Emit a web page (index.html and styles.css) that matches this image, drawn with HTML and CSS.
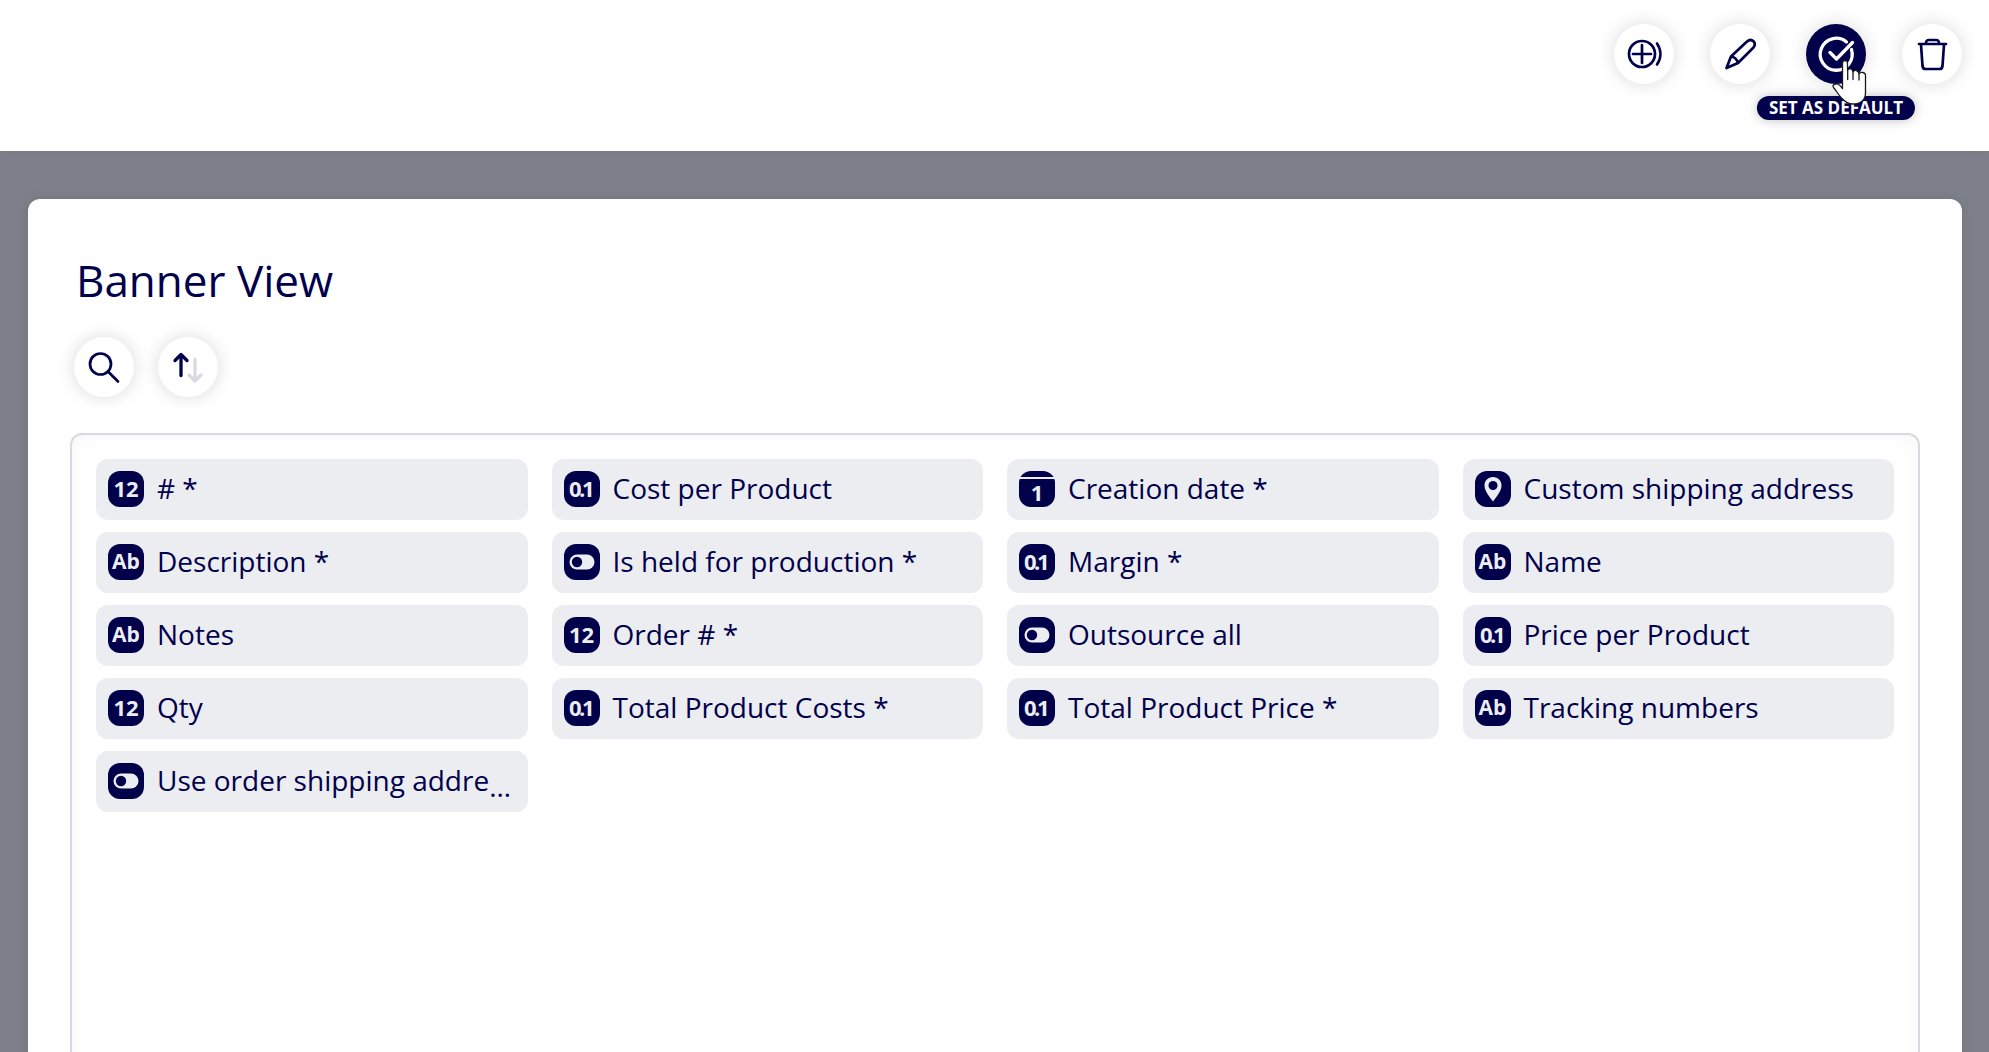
FILE: index.html
```html
<!DOCTYPE html>
<html lang="en">
<head>
<meta charset="utf-8">
<title>Banner View</title>
<meta name="viewport" content="width=device-width, initial-scale=1">
<link rel="stylesheet" href="styles.css">
</head>
<body>
<svg class="sprite" aria-hidden="true">
  <symbol id="type-toggle" viewBox="0 0 36 36">
    <rect class="knockout" x="5.500" y="10.500" width="25" height="15" rx="7.500"/>
    <circle class="hole" cx="13" cy="18" r="5.200"/>
  </symbol>
  <symbol id="type-address" viewBox="0 0 36 36">
    <path class="knockout" d="M18 6c-5 0-8.500 3.600-8.500 8.400C9.500 20 14 25 18 30.500 22 25 26.500 20 26.500 14.400 26.500 9.600 23 6 18 6z"/>
    <circle class="hole" cx="18" cy="14.500" r="4.500"/>
  </symbol>
</svg>

<header class="toolbar">
  <button class="round-button" type="button" aria-label="Duplicate">
    <svg class="glyph" viewBox="0 0 60 60"><circle cx="28" cy="30" r="13"/><path d="M19 30h18M28 21v18M43 19.500c4.500 6.500 4.500 14.500 0 21"/></svg>
  </button>
  <button class="round-button" type="button" aria-label="Edit">
    <svg class="glyph" viewBox="0 0 60 60"><path d="M16.500 44l4.500-11.500L37 17.500c5-4 10 1.500 6.500 6L28 39zM21 32.500c3.500.5 6 3 7 6.500"/></svg>
  </button>
  <div class="with-tip">
    <button class="round-button is-active" type="button" aria-describedby="default-tip" aria-label="Set as default">
      <svg class="glyph glyph-bold" viewBox="0 0 60 60"><path d="M40.500 18A16 16 0 1 0 45.500 25.500M24 28.500l6.500 6.500L46.500 18.500"/></svg>
    </button>
    <span class="tip" id="default-tip" role="tooltip">SET AS DEFAULT</span>
    <svg class="pointer" viewBox="0 0 36 46" aria-hidden="true"><path d="M13 1.500c-1.700 0-2.500 1-2.500 2.500v25.500C8 26 5.500 24.500 3.500 25c-2.500.5-3 2-2 3.500 3 3.500 4.500 6.500 7.500 10 3.500 4 7 6.500 12 6.500 8 0 12.500-4.500 12.500-11V16.500c0-3.500-5-4-6.500-1.500-.5-4-4.500-4.500-6-2-.5-3.500-4-4-5.500-2V4c0-1.500-.8-2.500-2.500-2.500z"/><path d="M15.700 11v9.500M21 13v7.500M27 15v6"/></svg>
  </div>
  <button class="round-button" type="button" aria-label="Delete">
    <svg class="glyph" viewBox="0 0 60 60"><path d="M17 20h27M24 19.500c0-3 1-3.500 3-3.500h7c2 0 3 .5 3 3.500M19 20.500l1.500 21.500q.3 3 3 3h14q2.700 0 3-3l1.500-21.500"/></svg>
  </button>
</header>

<main class="workspace">
  <section class="panel">
    <h1 class="title">Banner View</h1>
    <div class="actions">
      <button class="round-button" type="button" aria-label="Search">
        <svg class="glyph" viewBox="0 0 60 60"><circle cx="26.500" cy="27" r="10.500"/><path d="M34 34.500l10 10"/></svg>
      </button>
      <button class="round-button" type="button" aria-label="Sort">
        <svg class="glyph glyph-bold" viewBox="0 0 60 60"><path class="faded" d="M37 22.500v21M31 38l6 6 6-6"/><path d="M23 38.500V18M17 23.500l6-6 6 6"/></svg>
      </button>
    </div>
    <ul class="fields">
      <li class="field"><span class="type">12</span><span class="label"># *</span></li>
      <li class="field"><svg class="type" viewBox="0 0 36 36"><text y="26" x="5 15 18">0.1</text></svg><span class="label">Cost per Product</span></li>
      <li class="field"><span class="type type-date">1</span><span class="label">Creation date *</span></li>
      <li class="field"><svg class="type" aria-hidden="true"><use href="#type-address"/></svg><span class="label">Custom shipping address</span></li>
      <li class="field"><span class="type type-text">Ab</span><span class="label">Description *</span></li>
      <li class="field"><svg class="type" aria-hidden="true"><use href="#type-toggle"/></svg><span class="label">Is held for production *</span></li>
      <li class="field"><svg class="type" viewBox="0 0 36 36"><text y="26" x="5 15 18">0.1</text></svg><span class="label">Margin *</span></li>
      <li class="field"><span class="type type-text">Ab</span><span class="label">Name</span></li>
      <li class="field"><span class="type type-text">Ab</span><span class="label">Notes</span></li>
      <li class="field"><span class="type">12</span><span class="label">Order # *</span></li>
      <li class="field"><svg class="type" aria-hidden="true"><use href="#type-toggle"/></svg><span class="label">Outsource all</span></li>
      <li class="field"><svg class="type" viewBox="0 0 36 36"><text y="26" x="5 15 18">0.1</text></svg><span class="label">Price per Product</span></li>
      <li class="field"><span class="type">12</span><span class="label">Qty</span></li>
      <li class="field"><svg class="type" viewBox="0 0 36 36"><text y="26" x="5 15 18">0.1</text></svg><span class="label">Total Product Costs *</span></li>
      <li class="field"><svg class="type" viewBox="0 0 36 36"><text y="26" x="5 15 18">0.1</text></svg><span class="label">Total Product Price *</span></li>
      <li class="field"><span class="type type-text">Ab</span><span class="label">Tracking numbers</span></li>
      <li class="field"><svg class="type" aria-hidden="true"><use href="#type-toggle"/></svg><span class="label">Use order shipping addre<span class="more">…</span></span></li>
    </ul>
  </section>
</main>
</body>
</html>
```

FILE: styles.css
```css
:root {
  --navy: #00004b;
  --grey: #ecedf1;
  --line: #d9dae0;
}

* {
  box-sizing: border-box;
}

body {
  display: flex;
  flex-direction: column;
  height: 100vh;
  margin: 0;
  overflow: hidden;
  background: #7d7f8a;
  color: var(--navy);
  font-family: "Open Sans", "Noto Sans", sans-serif;
  font-size: 28px;
}

.sprite {
  position: absolute;
  width: 0;
  height: 0;
}

.toolbar {
  display: flex;
  flex: none;
  justify-content: flex-end;
  gap: 36px;
  padding: 24px 27px 67px;
  background: #fff;
  box-shadow: 0 0 12px rgba(0, 0, 0, 0.06);
}

.round-button {
  display: block;
  width: 60px;
  height: 60px;
  padding: 0;
  border: 0;
  border-radius: 50%;
  background: #fff;
  color: var(--navy);
  box-shadow: 0 0 18px rgba(0, 0, 0, 0.15);
  cursor: pointer;
}

.round-button.is-active {
  background: var(--navy);
  color: #fff;
}

.glyph {
  display: block;
  width: 60px;
  height: 60px;
  fill: none;
  stroke: currentColor;
  stroke-width: 2.7;
  stroke-linecap: round;
  stroke-linejoin: round;
}

.glyph-bold {
  stroke-width: 3.3;
}

.faded {
  stroke: var(--line);
}

.with-tip {
  position: relative;
}

.tip {
  position: absolute;
  top: 72px;
  left: 50%;
  padding: 0 12px;
  border-radius: 12px;
  background: var(--navy);
  color: #fff;
  box-shadow: 0 0 12px rgba(0, 0, 0, 0.25);
  font-size: 17px;
  font-weight: 700;
  line-height: 24px;
  white-space: nowrap;
  transform: translateX(-50%);
}

.pointer {
  position: absolute;
  top: 35px;
  left: 26px;
  width: 36px;
  height: 46px;
  fill: #fff;
  stroke: #1a1a1a;
  stroke-width: 1.3;
  stroke-linecap: round;
  stroke-linejoin: round;
}

.workspace {
  flex: 1;
  min-height: 0;
  padding: 48px 27px 0 28px;
}

.panel {
  padding: 48px 42px;
  border-radius: 12px;
  background: #fff;
  box-shadow: 0 0 12px rgba(0, 0, 0, 0.1);
}

.title {
  margin: 0 0 24px 6px;
  font-size: 44px;
  font-weight: 400;
  line-height: 66px;
}

.actions {
  display: flex;
  gap: 24px;
  padding-left: 4px;
}

.fields {
  display: grid;
  grid-template-columns: repeat(4, minmax(0, 1fr));
  align-content: start;
  gap: 12px 24px;
  min-height: 100vh;
  margin: 36px 0 0;
  padding: 24px;
  border: 2px solid var(--line);
  border-radius: 12px;
  box-shadow: inset 0 0 18px rgba(0, 0, 0, 0.04);
  list-style: none;
}

.field {
  display: flex;
  align-items: flex-start;
  gap: 13px;
  height: 61px;
  padding: 12px;
  border-radius: 12px;
  background: var(--grey);
}

.type {
  flex: none;
  width: 36px;
  height: 36px;
  border-radius: 12px;
  background: var(--navy);
  color: var(--grey);
  fill: var(--grey);
  font-size: 22px;
  font-weight: 700;
  line-height: 34px;
  text-align: center;
}

.type-text {
  font-size: 21px;
}

.type-date {
  padding-top: 5px;
  background: linear-gradient(var(--navy) 6px, var(--grey) 6px, var(--grey) 8px, var(--navy) 8px);
  line-height: 32px;
}

.hole {
  fill: var(--navy);
}

.label {
  display: flex;
  font-weight: 400;
  line-height: 34px;
  white-space: nowrap;
}

.more {
  padding-top: 6px;
}
```
